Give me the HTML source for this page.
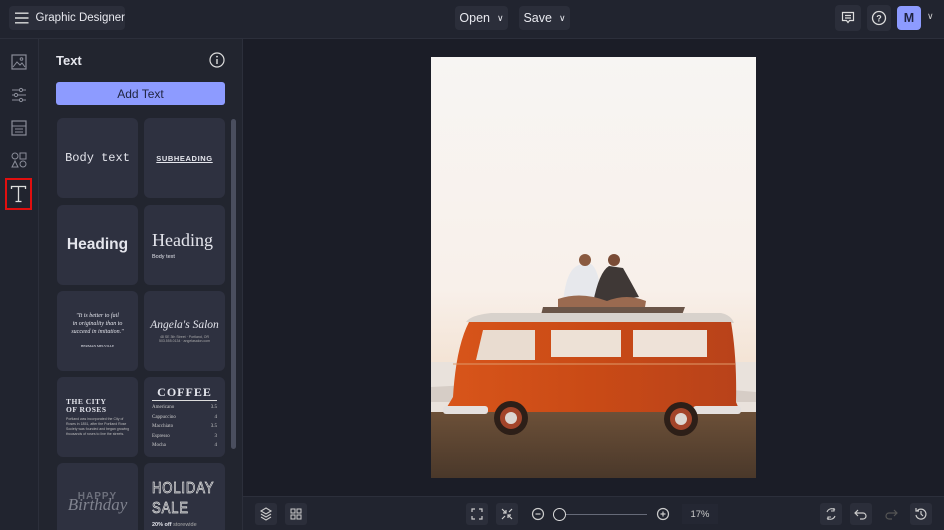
<!DOCTYPE html>
<html><head><meta charset="utf-8"><style>
*{margin:0;padding:0;box-sizing:border-box}
html,body{width:944px;height:530px;overflow:hidden}
body{background:#1b1d27;font-family:"Liberation Sans",sans-serif;color:#e6e7ee;position:relative}
.abs{position:absolute}
.top{left:0;top:0;width:944px;height:39px;background:#21242f;border-bottom:1px solid #2c2f3b}
.btn{position:absolute;background:#2b2e3a;border-radius:4px;color:#e8e9ef;font-size:12.5px;display:flex;align-items:center;justify-content:center;white-space:nowrap}
.rail{left:0;top:39px;width:39px;height:491px;background:#21242f;border-right:1px solid #2c2f3b}
.panel{left:39px;top:39px;width:204px;height:491px;background:#22252f;border-right:1px solid #2c2f3b;overflow:hidden}
.card{position:absolute;width:81px;height:80px;background:#2e3140;border-radius:6px;overflow:hidden;display:flex;flex-direction:column;align-items:center;justify-content:center;color:#e4e5ec;white-space:nowrap}
.bot{left:243px;top:496px;width:701px;height:34px;background:#21242f;border-top:1px solid #2c2f3b}
.ib{position:absolute;width:22px;height:22px;background:#2b2e3a;border-radius:3px;top:6px}
svg{display:block}
</style></head><body>
<div class="abs top">
 <div class="btn" style="left:9px;top:6px;width:116px;height:24px;justify-content:flex-start;padding-left:6px">
  <svg width="14" height="12" viewBox="0 0 14 12"><path d="M0 1h14M0 6h14M0 11h14" stroke="#ddd" stroke-width="1.5"/></svg>
  <span style="margin-left:7px;font-size:11.5px">Graphic Designer</span></div>
 <div class="btn" style="left:455px;top:6px;width:53px;height:24px">Open <span style="font-size:9px;margin-left:7px">&#x2228;</span></div>
 <div class="btn" style="left:519px;top:6px;width:51px;height:24px">Save <span style="font-size:9px;margin-left:7px">&#x2228;</span></div>
 <div class="btn" style="left:835px;top:5px;width:26px;height:26px"><svg width="14" height="14" viewBox="0 0 14 14"><path d="M1.5 1.5h11v8h-4l-1.5 2-1.5-2h-4z M4 4.5h6M4 7h6" fill="none" stroke="#ddd" stroke-width="1.2"/></svg></div>
 <div class="btn" style="left:867px;top:5px;width:24px;height:26px"><svg width="16" height="16" viewBox="0 0 16 16"><circle cx="8" cy="8" r="6.5" fill="none" stroke="#ddd" stroke-width="1.3"/><text x="8" y="11.5" font-size="9" text-anchor="middle" fill="#ddd" font-family="Liberation Sans" font-weight="bold">?</text></svg></div>
 <div class="btn" style="left:897px;top:6px;width:24px;height:24px;background:#8d9bff;color:#1f2340;font-weight:bold">M</div>
 <div class="abs" style="left:927px;top:11px;font-size:9px;color:#ccc">&#x2228;</div>
</div>
<div class="abs rail">
 <svg class="abs" style="left:11px;top:15px" width="16" height="16" viewBox="0 0 16 16"><rect x="1" y="1" width="14" height="14" fill="none" stroke="#8a8d99" stroke-width="1.2"/><path d="M2 13l4-5 3 3 2-2 3 4" fill="none" stroke="#8a8d99"/><circle cx="10.5" cy="5" r="1.3" fill="none" stroke="#8a8d99"/></svg>
 <svg class="abs" style="left:11px;top:48px" width="16" height="16" viewBox="0 0 16 16"><path d="M1 3h14M1 8h14M1 13h14" stroke="#8a8d99"/><circle cx="10" cy="3" r="1.6" fill="#21242f" stroke="#8a8d99"/><circle cx="5" cy="8" r="1.6" fill="#21242f" stroke="#8a8d99"/><circle cx="10" cy="13" r="1.6" fill="#21242f" stroke="#8a8d99"/></svg>
 <svg class="abs" style="left:11px;top:81px" width="16" height="16" viewBox="0 0 16 16"><rect x="1" y="1" width="14" height="14" fill="none" stroke="#8a8d99" stroke-width="1.2"/><path d="M1 6h14M4 9h8M4 12h8" stroke="#8a8d99"/></svg>
 <svg class="abs" style="left:11px;top:113px" width="16" height="16" viewBox="0 0 16 16"><circle cx="4" cy="4" r="3" fill="none" stroke="#8a8d99"/><rect x="9" y="1" width="6" height="6" fill="none" stroke="#8a8d99"/><path d="M4 9l3 6H1z" fill="none" stroke="#8a8d99"/><circle cx="12" cy="12" r="3" fill="none" stroke="#8a8d99"/></svg>
 <div class="abs" style="left:5px;top:139px;width:27px;height:32px;border:2px solid #e10f0f"></div>
 <svg class="abs" style="left:10px;top:146px" width="17" height="18" viewBox="0 0 17 18"><path d="M1.5 4V1.5h14V4M8.5 1.5V16.5M5.5 16.5h6" fill="none" stroke="#ddd" stroke-width="1.3"/></svg>
</div>
<div class="abs panel">
 <div class="abs" style="left:17px;top:14px;font-size:13px;font-weight:bold">Text</div>
 <svg class="abs" style="left:170px;top:13px" width="16" height="16" viewBox="0 0 16 16"><circle cx="8" cy="8" r="7" fill="none" stroke="#ddd" stroke-width="1.2"/><path d="M8 7v5" stroke="#ddd" stroke-width="1.4"/><circle cx="8" cy="4.6" r=".9" fill="#ddd"/></svg>
 <div class="abs" style="left:17px;top:43px;width:169px;height:23px;background:#8d9bff;border-radius:3px;color:#1f2440;font-size:12px;display:flex;align-items:center;justify-content:center">Add Text</div>
 <div class="abs" style="left:192px;top:80px;width:5px;height:330px;background:#4a4e5e;border-radius:3px"></div>
 <div class="card" style="left:18px;top:79px;font-family:'Liberation Mono',monospace;font-size:12px">Body text</div>
 <div class="card" style="left:105px;top:79px;font-size:7.5px;font-weight:bold;letter-spacing:.6px;text-decoration:underline">SUBHEADING</div>
 <div class="card" style="left:18px;top:166px;font-size:15.5px;font-weight:bold">Heading</div>
 <div class="card" style="left:105px;top:166px;align-items:flex-start;padding-left:8px"><div style="font-family:'Liberation Serif',serif;font-size:18px">Heading</div><div style="font-size:5.5px;margin-top:3px">Body text</div></div>
 <div class="card" style="left:18px;top:252px;font-family:'Liberation Serif',serif;font-style:italic;font-size:6px;text-align:center;line-height:8px">"It is better to fail<br>in originality than to<br>succeed in imitation."<div style="font-size:3.5px;margin-top:6px;font-style:normal">HERMAN MELVILLE</div></div>
 <div class="card" style="left:105px;top:252px;"><div style="font-family:'Liberation Serif',serif;font-style:italic;font-size:11.5px">Angela's Salon</div><div style="font-size:3.5px;margin-top:4px;color:#aaa;text-align:center">48 SE 3th Street · Portland, OR<br>503.555.0134 · angelasalon.com</div></div>
 <div class="card" style="left:18px;top:338px;align-items:flex-start;padding-left:9px"><div style="font-family:'Liberation Serif',serif;font-weight:bold;font-size:7.5px;line-height:8px;letter-spacing:.5px">THE CITY<br>OF ROSES</div><div style="font-size:3.5px;line-height:5px;margin-top:3px;color:#bbb">Portland was incorporated the City of<br>Roses in 1851, after the Portland Rose<br>Society was founded and began growing<br>thousands of roses to line the streets.</div></div>
 <div class="card" style="left:105px;top:338px;justify-content:flex-start;padding:8px 8px 0"><div style="font-family:'Liberation Serif',serif;font-weight:900;font-size:12px;letter-spacing:1px;border-bottom:1px solid #ddd;width:100%;text-align:center">COFFEE</div><div style="font-family:'Liberation Serif',serif;font-size:5px;line-height:9.5px;width:100%;margin-top:2px;color:#ccc">Americano<span style="float:right">3.5</span><br>Cappuccino<span style="float:right">4</span><br>Macchiato<span style="float:right">3.5</span><br>Espresso<span style="float:right">3</span><br>Mocha<span style="float:right">4</span></div></div>
 <div class="card" style="left:18px;top:424px;color:#6d707c"><div style="font-size:10px;font-weight:bold;letter-spacing:1px">HAPPY</div><div style="font-family:'Liberation Serif',serif;font-style:italic;font-size:17px;margin-top:-7px;color:#80838f">Birthday</div></div>
 <div class="card" style="left:105px;top:424px;align-items:flex-start;padding-left:8px;justify-content:flex-start;padding-top:16px"><div style="font-size:16px;line-height:20px;color:transparent;-webkit-text-stroke:.8px #ddd;transform:scaleX(.82);transform-origin:left;letter-spacing:1px">HOLIDAY<br>SALE</div><div style="font-size:5.5px;font-weight:bold;margin-top:3px">20% off <span style="font-weight:normal;color:#aaa">storewide</span></div></div>
</div>
<!-- photo -->
<svg class="abs" style="left:431px;top:57px" width="325" height="421" viewBox="0 0 325 421">
 <defs><linearGradient id="sky" x1="0" y1="0" x2="0" y2="1"><stop offset="0" stop-color="#f7f5f3"/><stop offset=".55" stop-color="#f8f0ea"/><stop offset=".75" stop-color="#f3e2d2"/><stop offset="1" stop-color="#d9c4b0"/></linearGradient>
 <linearGradient id="gnd" x1="0" y1="0" x2="0" y2="1"><stop offset="0" stop-color="#6c5038"/><stop offset="1" stop-color="#4a382a"/></linearGradient>
 <linearGradient id="van" x1="0" y1="0" x2="1" y2="0"><stop offset="0" stop-color="#d8551a"/><stop offset=".5" stop-color="#c94a16"/><stop offset="1" stop-color="#b8421a"/></linearGradient></defs>
 <rect width="325" height="421" fill="url(#sky)"/>
 <rect y="305" width="325" height="50" fill="#e9e2dc"/>
 <rect y="355" width="325" height="66" fill="url(#gnd)"/>
 <path d="M0 330 Q160 320 325 335 L325 345 L0 345z" fill="#d6cdc6"/>
 <path d="M112 250h142l-3 8H110z" fill="#6a5548"/>
 <path d="M35 265 Q40 258 60 256 L290 256 Q300 258 303 266 Z" fill="#d8d2cc"/>
 <path d="M38 265 L300 265 Q306 300 305 345 L308 352 L288 355 L20 355 L16 350 L22 340 Q25 290 38 265z" fill="url(#van)"/>
 <path d="M52 273h52v30H45z" fill="#e9dcd0"/><path d="M120 273h70v27h-70z" fill="#ede1d6"/><path d="M202 273h74v27h-74z" fill="#eee2d8"/>
 <path d="M22 307h282" stroke="#e09a6a" stroke-width="1"/>
 <rect x="12" y="349" width="45" height="8" rx="3" fill="#e4e0de"/><rect x="262" y="349" width="48" height="8" rx="3" fill="#e4e0de"/>
 <circle cx="80" cy="361" r="17" fill="#2d1f18"/><circle cx="80" cy="361" r="11" fill="#a3442a"/><circle cx="80" cy="361" r="6" fill="#dcd6d2"/>
 <circle cx="250" cy="362" r="17" fill="#2d1f18"/><circle cx="250" cy="362" r="11" fill="#a3442a"/><circle cx="250" cy="362" r="6" fill="#dcd6d2"/>
 <path d="M132 246 Q135 212 148 208 L160 207 Q168 212 170 240z" fill="#e7e8ec"/>
 <path d="M162 246 Q168 215 178 209 L192 211 Q200 225 208 240z" fill="#3f3836"/>
 <circle cx="154" cy="203" r="6" fill="#8a5a40"/><circle cx="183" cy="203" r="6" fill="#7a4c36"/>
 <path d="M127 242 Q150 234 176 244 Q196 236 215 244 L214 250 L127 250z" fill="#9a6a50"/>
</svg>
<div class="abs bot">
 <div class="ib" style="left:12px"><svg width="22" height="22" viewBox="0 0 22 22"><path d="M11 5l5 3-5 3-5-3z M6 11l5 3 5-3 M6 14l5 3 5-3" fill="none" stroke="#ccc" stroke-width="1.1"/></svg></div>
 <div class="ib" style="left:42px"><svg width="22" height="22" viewBox="0 0 22 22"><rect x="6" y="6" width="4" height="4" fill="none" stroke="#ccc"/><rect x="12" y="6" width="4" height="4" fill="none" stroke="#ccc"/><rect x="6" y="12" width="4" height="4" fill="none" stroke="#ccc"/><rect x="12" y="12" width="4" height="4" fill="none" stroke="#ccc"/></svg></div>
 <div class="ib" style="left:223px"><svg width="22" height="22" viewBox="0 0 22 22"><path d="M6 9V6h3M13 6h3v3M16 13v3h-3M9 16H6v-3" fill="none" stroke="#ccc" stroke-width="1.2"/></svg></div>
 <div class="ib" style="left:253px"><svg width="22" height="22" viewBox="0 0 22 22"><path d="M6 6l4 4M10 7v3H7M16 6l-3 3M16 16l-4-4M12 15v-3h3M6 16l3-3" fill="none" stroke="#ccc" stroke-width="1.2"/></svg></div>
 <svg class="abs" style="left:288px;top:10px" width="14" height="14" viewBox="0 0 14 14"><circle cx="7" cy="7" r="5.5" fill="none" stroke="#ccc" stroke-width="1.2"/><path d="M4.5 7h5" stroke="#ccc" stroke-width="1.2"/></svg>
 <div class="abs" style="left:316px;top:17px;width:88px;height:1px;background:#666a78"></div>
 <div class="abs" style="left:310px;top:11px;width:13px;height:13px;border-radius:50%;border:1.5px solid #ddd;background:#21242f"></div>
 <svg class="abs" style="left:413px;top:10px" width="14" height="14" viewBox="0 0 14 14"><circle cx="7" cy="7" r="5.5" fill="none" stroke="#ccc" stroke-width="1.2"/><path d="M4.5 7h5M7 4.5v5" stroke="#ccc" stroke-width="1.2"/></svg>
 <div class="abs" style="left:439px;top:7px;width:36px;height:20px;background:#242733;font-size:9.5px;color:#ccc;display:flex;align-items:center;justify-content:center">17%</div>
 <div class="ib" style="left:577px"><svg width="22" height="22" viewBox="0 0 22 22"><path d="M7 9a5 5 0 0 1 8-2M15 13a5 5 0 0 1-8 2M14 5v3h-3M8 17v-3h3" fill="none" stroke="#ccc" stroke-width="1.1"/></svg></div>
 <div class="ib" style="left:607px"><svg width="22" height="22" viewBox="0 0 22 22"><path d="M8 7L5 10l3 3M5 10h8a3 3 0 0 1 0 6h-3" fill="none" stroke="#ccc" stroke-width="1.2"/></svg></div>
 <div class="ib" style="left:637px;background:none"><svg width="22" height="22" viewBox="0 0 22 22"><path d="M14 7l3 3-3 3M17 10H9a3 3 0 0 0 0 6h3" fill="none" stroke="#555" stroke-width="1.2"/></svg></div>
 <div class="ib" style="left:667px"><svg width="22" height="22" viewBox="0 0 22 22"><path d="M7 8a5 5 0 1 1-1 4M6 5v3h3M11 8v3l2 2" fill="none" stroke="#ccc" stroke-width="1.2"/></svg></div>
</div>
</body></html>
